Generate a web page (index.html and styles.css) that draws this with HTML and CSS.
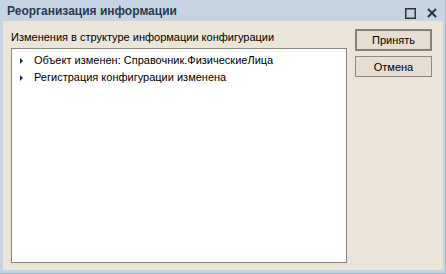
FILE: index.html
```html
<!DOCTYPE html>
<html>
	<head>
		<meta charset="utf-8">
		<link rel="stylesheet" href="styles.css">
	</head>
	<body>
		<div class="okno">
			<div class="zagolovok">
				<span class="nazvanie">Реорганизация информации</span>
				<div class="knopki-okna">
					<svg width="11" height="11" viewBox="0 0 11 11">
						<rect x="0.75" y="0.75" width="9.5" height="9.5" fill="none" stroke="#2f3336" stroke-width="1.5"/>
					</svg>
					<svg width="10" height="10" viewBox="0 0 10 10">
						<path d="M1 1 L9 9 M9 1 L1 9" stroke="#2f3336" stroke-width="2"/>
					</svg>
				</div>
			</div>
			<div class="soderzhimoe">
				<div class="levaya">
					<div class="podpis">Изменения в структуре информации конфигурации</div>
					<div class="spisok">
						<div class="stroka"><span class="strelka"></span>Объект изменен: Справочник.ФизическиеЛица</div>
						<div class="stroka"><span class="strelka"></span>Регистрация конфигурации изменена</div>
					</div>
				</div>
				<div class="pravaya">
					<button class="knopka osnovnaya">Принять</button>
					<button class="knopka">Отмена</button>
				</div>
			</div>
		</div>
	</body>
</html>
```

FILE: styles.css
```css
html, body {
	margin: 0;
	padding: 0;
}
body {
	width: 446px;
	height: 274px;
	font-family: "Liberation Sans", Arial, sans-serif;
	font-size: 11px;
	color: #000;
}
.okno {
	width: 446px;
	height: 274px;
	box-sizing: border-box;
	background: #c6d3e0;
	border-right: 1px solid #a9b9ca;
	border-bottom: 1px solid #9fb0c2;
	padding: 0 2px 3px 3px;
	display: flex;
	flex-direction: column;
}
.zagolovok {
	height: 21px;
	display: flex;
	align-items: center;
	justify-content: space-between;
	padding-left: 4px;
	padding-right: 6px;
}
.nazvanie {
	font-weight: bold;
	font-size: 12px;
	color: #2a3b52;
	padding-top: 1px;
}
.knopki-okna {
	display: flex;
	gap: 11px;
	align-items: center;
	padding-top: 5px;
}
.soderzhimoe {
	flex: 1;
	background: #ebe4d9;
	display: flex;
	padding: 8px 11px 7px 8px;
	gap: 8px;
}
.levaya {
	flex: 1;
	display: flex;
	flex-direction: column;
}
.podpis {
	height: 19px;
	line-height: 16px;
	padding-left: 0;
}
.spisok {
	flex: 1;
	background: #fff;
	border: 1px solid #8c877e;
	padding-top: 3px;
}
.stroka {
	height: 17px;
	line-height: 17px;
	display: flex;
	align-items: center;
	padding-left: 8px;
}
.strelka {
	width: 0;
	height: 0;
	border-top: 3px solid transparent;
	border-bottom: 3px solid transparent;
	border-left: 3px solid #1b2a7a;
	margin-right: 11px;
}
.pravaya {
	width: 77px;
	display: flex;
	flex-direction: column;
	gap: 5px;
}
.knopka {
	height: 21px;
	font-family: "Liberation Sans", Arial, sans-serif;
	font-size: 11px;
	color: #000;
	background: #e6ded3;
	border: 1px solid #8f8a81;
	padding: 0;
}
.osnovnaya {
	height: 22px;
	border: 2px solid #85807a;
}
```
